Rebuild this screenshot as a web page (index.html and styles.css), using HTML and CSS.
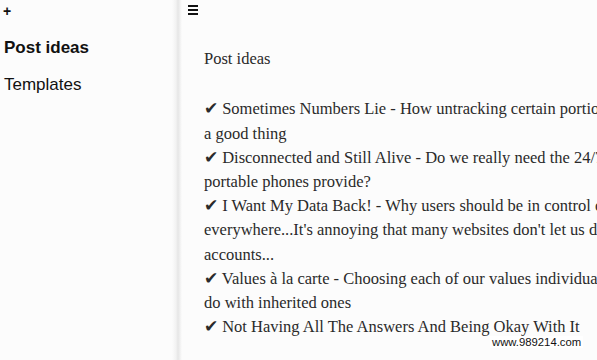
FILE: index.html
```html
<!DOCTYPE html>
<html>
<head>
<meta charset="utf-8">
<link rel="stylesheet" href="styles.css">
</head>
<body>
<div class="app">
  <aside class="sidebar">
    <div class="add">+</div>
    <nav class="lists">
      <div class="list-item active">Post ideas</div>
      <div class="list-item">Templates</div>
    </nav>
  </aside>
  <div class="divider"></div>
  <main class="main">
    <div class="menu"><span></span><span></span><span></span></div>
    <div class="doc">
      <div class="line title">Post ideas</div>
      <div class="line">&nbsp;</div>
      <div class="line">✔ Sometimes Numbers Lie - How untracking certain portions of our lives is</div>
      <div class="line">a good thing</div>
      <div class="line">✔ Disconnected and Still Alive - Do we really need the 24/7 connectivity that</div>
      <div class="line">portable phones provide?</div>
      <div class="line">✔ I Want My Data Back! - Why users should be in control of their data</div>
      <div class="line">everywhere...It's annoying that many websites don't let us delete our</div>
      <div class="line">accounts...</div>
      <div class="line">✔ Values à la carte - Choosing each of our values individually rather than making</div>
      <div class="line">do with inherited ones</div>
      <div class="line">✔ Not Having All The Answers And Being Okay With It</div>
    </div>
  </main>
</div>
<div class="watermark">www.989214.com</div>
</body>
</html>
```
FILE: styles.css
```css
html, body {
  margin: 0;
  padding: 0;
  width: 597px;
  height: 360px;
  overflow: hidden;
  background: #fcfcfc;
}
.app {
  display: flex;
  height: 360px;
  width: 597px;
  overflow: hidden;
}
.sidebar {
  flex: 0 0 172px;
  background: #fcfcfc;
  font-family: "Liberation Sans", Arial, sans-serif;
  color: #111;
}
.add {
  font-size: 14px;
  font-weight: bold;
  line-height: 14px;
  padding: 4px 0 0 3px;
  height: 18px;
  box-sizing: border-box;
}
.lists {
  padding: 20px 0 0 4px;
}
.list-item {
  font-size: 17px;
  line-height: 20px;
  margin-bottom: 17px;
}
.list-item.active {
  font-weight: bold;
}
.divider {
  flex: 0 0 10px;
  background: linear-gradient(to right, #fcfcfc 0%, #f2f2f2 40%, #e6e6e6 60%, #eeeeee 75%, #fcfcfc 100%);
}
.main {
  flex: 1 0 auto;
  min-width: 0;
  padding-left: 6px;
  background: #fcfcfc;
}
.menu {
  display: flex;
  flex-direction: column;
  gap: 2px;
  width: 10px;
  padding-top: 5px;
}
.menu span {
  display: block;
  height: 2px;
  background: #111;
}
.doc {
  padding: 32px 0 0 16px;
  font-family: "Liberation Serif", "Times New Roman", serif;
  font-size: 16.5px;
  line-height: 24.2px;
  color: #2a2a2a;
  white-space: nowrap;
}
.title {
  margin-bottom: 2px;
}
.watermark {
  position: absolute;
  left: 490px;
  top: 336px;
  font-family: "Liberation Sans", Arial, sans-serif;
  font-size: 11.3px;
  color: #111;
  background: #fff;
  padding: 0 2px;
}
```
